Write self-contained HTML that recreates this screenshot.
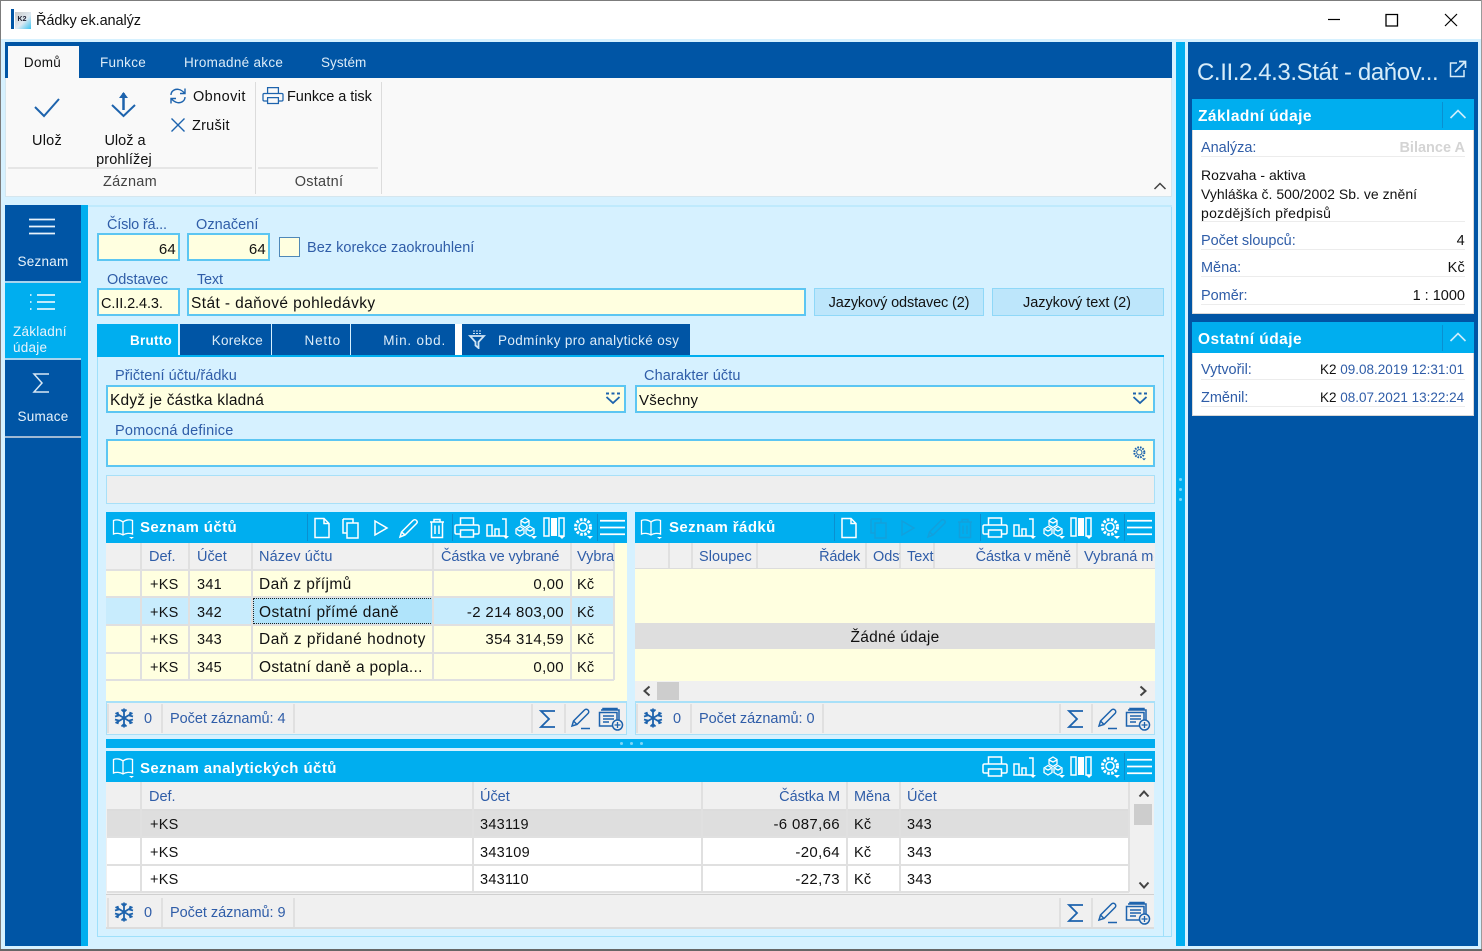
<!DOCTYPE html>
<html lang="cs"><head><meta charset="utf-8"><title>Řádky ek.analýz</title>
<style>
html,body{margin:0;padding:0;width:1482px;height:951px;overflow:hidden;background:#fff}
body{position:relative;font-family:"Liberation Sans",sans-serif;font-size:14.5px;color:#111}
div,svg{position:absolute}
.b{box-sizing:border-box}
.t{white-space:nowrap;line-height:18px;height:18px;letter-spacing:.25px;margin-top:1px}
.n{margin-top:0}
.l{color:#2f5da8;letter-spacing:-.03px}
.d{font-size:15.5px;letter-spacing:.4px}
.m{font-size:15px;letter-spacing:.35px}
.w{color:#fff}
.h{color:#fff;font-weight:bold;font-size:15px;letter-spacing:.42px}
.r{text-align:right}
.c{text-align:center}
.f{box-sizing:border-box;background:#ffffe0;border:2px solid #5cc6f2}
.tab{background:#0055a5;height:31px;top:324px}
.sep{background:#e0e0e0;width:2px}
svg{fill:none;stroke:currentColor;stroke-width:1.3}
.ic{color:#fff}
.blu{color:#1d63ad}
</style></head><body>
<svg width="0" height="0" style="left:0;top:0">
<symbol id="book" viewBox="0 0 22 22"><path d="M11 5C8 2.500 4 2.500 1.500 3.500V17C4 16 8 16 11 18C14 16 18 16 20.500 17V3.500C18 2.500 14 2.500 11 5ZM11 5V18"/><path d="M17 20h5l-2.500 2z" fill="currentColor" stroke="none"/></symbol>
<symbol id="doc" viewBox="0 0 22 22"><path d="M4 1.500H13L18 6.500V20.500H4ZM13 1.500V6.500H18" stroke-width="1.500"/></symbol>
<symbol id="copy" viewBox="0 0 22 22"><path d="M3 2H13V6M3 2V16H7M7 6H18V21H7Z" stroke-width="1.500"/></symbol>
<symbol id="play" viewBox="0 0 22 22"><path d="M6 4L18 11L6 18Z" stroke-width="1.500"/></symbol>
<symbol id="pen" viewBox="0 0 22 22"><path d="M3 20L4.500 15L16 3.500C17 2.500 18.500 2.500 19.500 3.500C20.500 4.500 20.500 5.500 19.500 6.500L8 18ZM4.500 15L8 18" stroke-width="1.500"/></symbol>
<symbol id="trash" viewBox="0 0 22 22"><path d="M4 5H18M8 5V2.500H14V5M5.500 5V20.500H16.500V5M9 8.500V17M13 8.500V17" stroke-width="1.500"/></symbol>
<symbol id="print" viewBox="0 0 26 24"><path d="M6.500 9V2H19.500V9M6.500 18H2.500C1.500 18 1 17.500 1 16.500V10.500C1 9.500 1.500 9 2.500 9H23.500C24.500 9 25 9.500 25 10.500V16.500C25 17.500 24.500 18 23.500 18H19.500M6.500 14H19.500V21H6.500Z" stroke-width="1.500"/></symbol>
<symbol id="bars" viewBox="0 0 24 24"><path d="M2 9H7V20H2ZM10 13H14V20H10ZM17 3H21V20H2" stroke-width="1.500"/><path d="M18 20h6l-3 3z" fill="currentColor" stroke="none"/></symbol>
<symbol id="cubes" viewBox="0 0 24 24"><path d="M12 2L16 4.500V9L12 11.500L8 9V4.500ZM7 10.500L11 13V17.500L7 20L3 17.500V13ZM17 10.500L21 13V17.500L17 20L13 17.500V13ZM8 5L12 7L16 5M4 13.500L7 15L10 13.500M14 13.500L17 15L20 13.500" stroke-width="1.300"/><path d="M18 20h6l-3 3z" fill="currentColor" stroke="none"/></symbol>
<symbol id="cols" viewBox="0 0 24 24"><path d="M2 2H7V20H2ZM17 2H22V20H17Z" stroke-width="1.500"/><path d="M9 2H15V20H9Z" fill="currentColor" stroke="none"/><path d="M17 20h6l-3 3z" fill="currentColor" stroke="none"/></symbol>
<symbol id="gear" viewBox="0 0 24 24"><circle cx="11" cy="11" r="4" stroke-width="1.500"/><circle cx="11" cy="11" r="7.500" stroke-width="3" stroke-dasharray="2.500 1.500"/><path d="M15 20h6l-3 3z" fill="currentColor" stroke="none"/></symbol>
<symbol id="menu" viewBox="0 0 26 22"><path d="M0 3.500H26M0 10.500H26M0 17.500H26" stroke-width="1.800"/></symbol>
<symbol id="snow" viewBox="0 0 22 22"><path d="M11 1.500V20.500M2.500 6L19.500 16M19.500 6L2.500 16M8.500 2.500L11 5L13.500 2.500M8.500 19.500L11 17L13.500 19.500M2 9.500L5.500 8.500L4.500 5M20 9.500L16.500 8.500L17.500 5M2 12.500L5.500 13.500L4.500 17M20 12.500L16.500 13.500L17.500 17" stroke-width="1.800"/></symbol>
<symbol id="sig" viewBox="0 0 22 22"><path d="M18 3H4L12 11L4 19H18" stroke-width="1.800"/></symbol>
<symbol id="pen2" viewBox="0 0 22 22"><path d="M2 18L3.500 13L14.500 2C15.500 1 17 1 18 2C19 3 19 4.500 18 5.500L7 16.500ZM3.500 13L7 16.500M11 20.500H20" stroke-width="1.500"/></symbol>
<symbol id="add" viewBox="0 0 26 24"><path d="M5 3V1.500H19V3M3 3H21V16M1.500 5.500H19V19H1.500ZM5 9H16M5 12H16M5 15H11" stroke-width="1.500"/><circle cx="19.500" cy="18" r="5" fill="#f0f0f0" stroke-width="1.500"/><path d="M16.500 18H22.500M19.500 15V21" stroke-width="1.300"/></symbol>
</svg>

<!-- window frame -->
<div style="left:0;top:0;width:1482px;height:1px;background:#7c7c7c"></div>
<div style="left:0;top:0;width:1px;height:951px;background:#7c7c7c"></div>
<div style="left:1481px;top:0;width:1px;height:951px;background:#9a9a9a"></div>
<div style="left:1px;top:39px;width:1480px;height:911px;background:#d6f1ff"></div>
<div style="left:0;top:949px;width:1482px;height:2px;background:#666"></div>
<div style="left:11px;top:9px;width:3px;height:20px;background:#0055a5"></div>
<div style="left:15px;top:12px;width:16px;height:17px;background:linear-gradient(135deg,#c9c9c9 0,#dfeaf2 55%,#3cc3f0 100%)"></div>
<div style="left:15px;top:15px;width:14px;height:9px;font-size:7px;font-weight:bold;line-height:9px;text-align:center;color:#223">K2</div>
<div class="t" style="left:36px;top:11px;font-size:14.500px;letter-spacing:-.1px">Řádky ek.analýz</div>
<svg style="left:1328px;top:14px;color:#000" width="14" height="12"><path d="M0 5.500H12" stroke-width="1.200"/></svg>
<svg style="left:1385px;top:13px;color:#000" width="14" height="14"><path d="M1 1.500H12.500V13H1Z" stroke-width="1.300"/></svg>
<svg style="left:1444px;top:13px;color:#000" width="14" height="14"><path d="M1 1L13 13M13 1L1 13" stroke-width="1.200"/></svg>

<!-- ribbon -->
<div style="left:5px;top:42px;width:1167px;height:36px;background:#0055a5"></div>
<div class="b" style="left:5px;top:78px;width:1167px;height:119px;background:#f9f9f9;border:1px solid #d5e6ee;border-top:0"></div>
<div style="left:8px;top:46px;width:71px;height:32px;background:#f9f9f9"></div>
<div class="t c" style="left:7px;top:53px;width:71px;font-size:13.500px;letter-spacing:.3px">Domů</div>
<div class="t w" style="left:100px;top:53px;font-size:13.500px;letter-spacing:.3px;color:#dcecf8">Funkce</div>
<div class="t w" style="left:184px;top:53px;font-size:13.500px;letter-spacing:.3px;color:#dcecf8">Hromadné akce</div>
<div class="t w" style="left:321px;top:53px;font-size:13.500px;letter-spacing:.05px;color:#dcecf8">Systém</div>
<svg class="blu" style="left:33px;top:96px" width="28" height="24"><path d="M2 11L11 20L26 3" stroke-width="2"/></svg>
<svg class="blu" style="left:110px;top:90px" width="28" height="30"><path d="M2 15L13.500 26L25 15" stroke-width="2"/><path d="M13.500 3V20" stroke-width="2.500"/><path d="M9 8L13.500 2L18 8Z" fill="currentColor" stroke="none"/></svg>
<div class="t c" style="left:17px;top:131px;width:60px">Ulož</div>
<div class="t c" style="left:90px;top:131px;width:70px;letter-spacing:0">Ulož a</div>
<div class="t c" style="left:84px;top:150px;width:80px;letter-spacing:.1px">prohlížej</div>
<svg class="blu" style="left:169px;top:87px" width="18" height="18" viewBox="0 0 18 18"><path d="M2 8C2 4 6 1.500 10 2.500C12.500 3 14 4.500 15.500 6M16 10C16 14 12 16.500 8 15.500C5.500 15 4 13.500 2.500 12M16 1.500V6.500H11M2 16.500V11.500H7" stroke-width="1.400"/></svg>
<svg class="blu" style="left:170px;top:117px" width="16" height="16"><path d="M1.500 1.500L14.500 14.500M14.500 1.500L1.500 14.500" stroke-width="1.400"/></svg>
<div class="t" style="left:193px;top:87px;letter-spacing:.4px">Obnovit</div>
<div class="t" style="left:192px;top:116px">Zrušit</div>
<svg class="blu" style="left:262px;top:86px" width="22" height="20"><use href="#print"/></svg>
<div class="t" style="left:287px;top:87px;letter-spacing:-.05px">Funkce a tisk</div>
<div style="left:8px;top:167px;width:244px;height:2px;background:#e6e6e6"></div>
<div style="left:258px;top:167px;width:120px;height:2px;background:#e6e6e6"></div>
<div style="left:255px;top:82px;width:1px;height:112px;background:#dcdcdc"></div>
<div style="left:381px;top:82px;width:1px;height:112px;background:#dcdcdc"></div>
<div class="t c" style="left:8px;top:172px;width:244px;color:#444">Záznam</div>
<div class="t c" style="left:259px;top:172px;width:120px;color:#444">Ostatní</div>
<svg style="left:1153px;top:181px;color:#444" width="14" height="10"><path d="M1.500 8L7 2.500L12.500 8" stroke-width="1.500"/></svg>

<!-- left rail -->
<div style="left:5px;top:205px;width:76px;height:741px;background:#0055a5"></div>
<div style="left:81px;top:205px;width:7px;height:741px;background:#00aeef"></div>
<div style="left:5px;top:281px;width:76px;height:2px;background:#a8d4ee"></div>
<div style="left:5px;top:283px;width:76px;height:75px;background:#00aeef"></div>
<div style="left:5px;top:358px;width:76px;height:2px;background:#a8d4ee"></div>
<div style="left:5px;top:436px;width:76px;height:2px;background:#9fb9d4"></div>
<svg class="ic" style="left:29px;top:216px;color:#e8f3fb" width="26" height="22"><use href="#menu"/></svg>
<div class="t c n" style="left:5px;top:253px;width:76px;color:#e8f3fb;font-size:13.500px">Seznam</div>
<svg style="left:29px;top:292px;color:#fff" width="26" height="20"><path d="M8 3H26M8 10H26M8 17H26" stroke-width="1.400"/><path d="M1 3H4M1 10H4M1 17H4" stroke-width="1.400" stroke-dasharray="1.500 1.500"/></svg>
<div class="t n" style="left:13px;top:323px;color:#e8f3fb;font-size:13.500px">Základní</div>
<div class="t n" style="left:13px;top:339px;color:#e8f3fb;font-size:13.500px">údaje</div>
<svg style="left:32px;top:372px;color:#d8e8f5" width="20" height="22"><path d="M17 2H2L10 11L2 20H17" stroke-width="1.500"/></svg>
<div class="t c n" style="left:5px;top:408px;width:76px;color:#e8f3fb;font-size:13.500px">Sumace</div>

<!-- content -->
<div class="b" style="left:97px;top:205px;width:1075px;height:732px;border:1px solid #9fe0fb;border-left:0;border-top:0"></div>
<div style="left:88px;top:205px;width:1084px;height:2px;background:#bfeafd"></div>
<div style="left:97px;top:936px;width:1067px;height:1px;background:#9fe0fb"></div>
<div style="left:1163px;top:357px;width:1px;height:580px;background:#9fe0fb"></div>
<div style="left:97px;top:357px;width:1px;height:580px;background:#9fe0fb"></div>

<div class="t l" style="left:107px;top:215px;letter-spacing:-.2px">Číslo řá...</div>
<div class="t l" style="left:196px;top:215px;letter-spacing:.05px">Označení</div>
<div class="f" style="left:97px;top:233px;width:83px;height:28px"></div>
<div class="f" style="left:187px;top:233px;width:83px;height:28px"></div>
<div class="t r" style="left:97px;top:240px;width:79px;font-size:15px">64</div>
<div class="t r" style="left:187px;top:240px;width:79px;font-size:15px">64</div>
<div class="b" style="left:279px;top:237px;width:21px;height:20px;background:#ffffe0;border:1px solid #4f88b8"></div>
<div class="t l n" style="left:307px;top:239px;letter-spacing:.02px">Bez korekce zaokrouhlení</div>
<div class="t l" style="left:107px;top:270px">Odstavec</div>
<div class="t l" style="left:197px;top:270px;letter-spacing:-.2px">Text</div>
<div class="f" style="left:97px;top:288px;width:83px;height:28px"></div>
<div class="f" style="left:187px;top:288px;width:619px;height:28px"></div>
<div class="t" style="left:101px;top:294px;letter-spacing:-.1px">C.II.2.4.3.</div>
<div class="t d" style="left:191px;top:294px">Stát - daňové pohledávky</div>
<div class="b" style="left:814px;top:288px;width:170px;height:28px;background:#bde6fb;border:1px solid #8fd8f8"></div>
<div class="b" style="left:992px;top:288px;width:172px;height:28px;background:#bde6fb;border:1px solid #8fd8f8"></div>
<div class="t c n" style="left:814px;top:294px;width:170px;letter-spacing:-.13px">Jazykový odstavec (2)</div>
<div class="t c n" style="left:992px;top:294px;width:170px;letter-spacing:-.05px">Jazykový text (2)</div>

<!-- tabs -->
<div class="tab" style="left:97px;width:81px;background:#00aeef"></div>
<div class="tab" style="left:180px;width:91px"></div>
<div class="tab" style="left:272px;width:78px"></div>
<div class="tab" style="left:351px;width:104px"></div>
<div class="tab" style="left:462px;width:228px"></div>
<div style="left:455px;top:324px;width:7px;height:31px;background:#fff"></div>
<div style="left:97px;top:355px;width:1067px;height:2px;background:#00aeef"></div>
<div class="t r w n" style="left:97px;top:332px;width:75px;font-size:13.500px;font-weight:bold;color:#fff">Brutto</div>
<div class="t r n" style="left:180px;top:332px;width:83px;font-size:13.500px;color:#dcecf8">Korekce</div>
<div class="t r n" style="left:272px;top:332px;width:69px;font-size:13.500px;letter-spacing:.85px;color:#dcecf8">Netto</div>
<div class="t r n" style="left:351px;top:332px;width:95px;font-size:13.500px;letter-spacing:.8px;color:#dcecf8">Min. obd.</div>
<div class="t n" style="left:498px;top:332px;font-size:13.500px;letter-spacing:.35px;color:#dcecf8">Podmínky pro analytické osy</div>
<svg style="left:468px;top:329px;color:#cfe4f4" width="18" height="20"><path d="M2 7H16L10.500 13V19L7.500 16.500V13Z" stroke-width="1.800"/><path d="M5 2H13M5 4.500H13" stroke-width="1" stroke-dasharray="2 1"/></svg>

<div class="t l" style="left:115px;top:366px;letter-spacing:.05px">Přičtení účtu/řádku</div>
<div class="t l" style="left:644px;top:366px;letter-spacing:.1px">Charakter účtu</div>
<div class="f" style="left:106px;top:385px;width:520px;height:28px"></div>
<div class="f" style="left:635px;top:385px;width:520px;height:28px"></div>
<div class="t" style="left:110px;top:391px;font-size:15.500px;letter-spacing:.2px">Když je částka kladná</div>
<div class="t" style="left:639px;top:391px;font-size:15px">Všechny</div>
<svg class="blu" style="left:605px;top:392px" width="16" height="13"><path d="M1 1.500H4M6.500 1.500H9.500M12 1.500H15" stroke-width="2"/><path d="M1.500 5L8 11L14.500 5" stroke-width="1.800"/></svg>
<svg class="blu" style="left:1132px;top:392px" width="16" height="13"><path d="M1 1.500H4M6.500 1.500H9.500M12 1.500H15" stroke-width="2"/><path d="M1.500 5L8 11L14.500 5" stroke-width="1.800"/></svg>
<div class="t l" style="left:115px;top:421px;letter-spacing:.2px">Pomocná definice</div>
<div class="f" style="left:106px;top:439px;width:1049px;height:28px"></div>
<svg class="blu" style="left:1132px;top:445px" width="16" height="16" viewBox="0 0 22 22"><use href="#gear"/></svg>
<div class="b" style="left:106px;top:475px;width:1049px;height:29px;background:#eeeeee;border:1px solid #a8e0f8"></div>

<!-- TABLE 1 -->
<div style="left:106px;top:512px;width:521px;height:223px;background:#ffffe0"></div>
<div style="left:106px;top:512px;width:521px;height:31px;background:#00aeef"></div>
<svg class="ic" style="left:112px;top:517px" width="22" height="22"><use href="#book"/></svg>
<div class="t h" style="left:140px;top:518px">Seznam účtů</div>
<div style="left:307px;top:514px;width:1px;height:27px;background:#0a8fd0"></div>
<div style="left:452px;top:514px;width:1px;height:27px;background:#0a8fd0"></div>
<div style="left:597px;top:514px;width:1px;height:27px;background:#0a8fd0"></div>
<svg class="ic" style="left:311px;top:517px" width="22" height="22"><use href="#doc"/></svg>
<svg class="ic" style="left:340px;top:517px" width="22" height="22"><use href="#copy"/></svg>
<svg class="ic" style="left:369px;top:517px" width="22" height="22"><use href="#play"/></svg>
<svg class="ic" style="left:397px;top:517px" width="22" height="22"><use href="#pen"/></svg>
<svg class="ic" style="left:426px;top:517px" width="22" height="22"><use href="#trash"/></svg>
<svg class="ic" style="left:454px;top:516px" width="26" height="24"><use href="#print"/></svg>
<svg class="ic" style="left:485px;top:516px" width="24" height="24"><use href="#bars"/></svg>
<svg class="ic" style="left:513px;top:516px" width="24" height="24"><use href="#cubes"/></svg>
<svg class="ic" style="left:542px;top:516px" width="24" height="24"><use href="#cols"/></svg>
<svg class="ic" style="left:572px;top:516px" width="24" height="24"><use href="#gear"/></svg>
<svg class="ic" style="left:600px;top:517px" width="25" height="22"><use href="#menu"/></svg>

<div style="left:106px;top:543px;width:508px;height:27px;background:#f0f0f0"></div>
<div style="left:106px;top:597px;width:508px;height:28px;background:#c8ecfd"></div>
<div class="b" style="left:253px;top:598px;width:180px;height:26px;background:#b0e4fb;border:1px dotted #222"></div>
<div style="left:106px;top:569px;width:508px;height:2px;background:#e0e0e0"></div>
<div style="left:106px;top:596px;width:508px;height:2px;background:#e0e0e0"></div>
<div style="left:106px;top:624px;width:508px;height:2px;background:#e0e0e0"></div>
<div style="left:106px;top:652px;width:508px;height:2px;background:#e0e0e0"></div>
<div style="left:106px;top:679px;width:508px;height:2px;background:#e0e0e0"></div>
<div class="sep" style="left:140px;top:543px;height:137px"></div>
<div class="sep" style="left:188px;top:543px;height:137px"></div>
<div class="sep" style="left:251px;top:543px;height:137px"></div>
<div class="sep" style="left:432px;top:543px;height:137px"></div>
<div class="sep" style="left:570px;top:543px;height:137px"></div>
<div class="sep" style="left:613px;top:543px;height:137px"></div>
<div class="t l" style="left:149px;top:547px">Def.</div>
<div class="t l" style="left:197px;top:547px">Účet</div>
<div class="t l" style="left:259px;top:547px;letter-spacing:.1px">Název účtu</div>
<div class="t l" style="left:441px;top:547px;letter-spacing:-.1px">Částka ve vybrané</div>
<div class="t l" style="left:577px;top:547px;width:37px;overflow:hidden">Vybrané</div>

<div class="t" style="left:150px;top:575px">+KS</div><div class="t" style="left:197px;top:575px">341</div><div class="t d" style="left:259px;top:575px">Daň z příjmů</div><div class="t r m" style="left:440px;top:575px;width:124px">0,00</div><div class="t" style="left:577px;top:575px">Kč</div>
<div class="t" style="left:150px;top:603px">+KS</div><div class="t" style="left:197px;top:603px">342</div><div class="t d" style="left:259px;top:603px">Ostatní přímé daně</div><div class="t r m" style="left:440px;top:603px;width:124px">-2 214 803,00</div><div class="t" style="left:577px;top:603px">Kč</div>
<div class="t" style="left:150px;top:630px">+KS</div><div class="t" style="left:197px;top:630px">343</div><div class="t d" style="left:259px;top:630px;letter-spacing:.52px">Daň z přidané hodnoty</div><div class="t r m" style="left:440px;top:630px;width:124px">354 314,59</div><div class="t" style="left:577px;top:630px">Kč</div>
<div class="t" style="left:150px;top:658px">+KS</div><div class="t" style="left:197px;top:658px">345</div><div class="t d" style="left:259px;top:658px;letter-spacing:.3px">Ostatní daně a popla...</div><div class="t r m" style="left:440px;top:658px;width:124px">0,00</div><div class="t" style="left:577px;top:658px">Kč</div>

<div class="b" style="left:106px;top:701px;width:521px;height:34px;background:#f0f0f0;border:1px solid #a8e0f8;border-top:2px solid #a8e0f8"></div>
<div class="sep" style="left:107px;top:704px;height:29px"></div>
<div class="sep" style="left:161px;top:704px;height:29px"></div>
<div class="sep" style="left:293px;top:704px;height:29px"></div>
<div class="sep" style="left:531px;top:704px;height:29px"></div>
<div class="sep" style="left:564px;top:704px;height:29px"></div>
<svg class="blu" style="left:113px;top:707px" width="22" height="22"><use href="#snow"/></svg>
<div class="t l n" style="left:144px;top:710px">0</div>
<div class="t l n" style="left:170px;top:710px">Počet záznamů: 4</div>
<svg class="blu" style="left:537px;top:708px" width="22" height="22"><use href="#sig"/></svg>
<svg class="blu" style="left:570px;top:708px" width="22" height="22"><use href="#pen2"/></svg>
<svg class="blu" style="left:598px;top:707px" width="26" height="24"><use href="#add"/></svg>

<!-- TABLE 2 -->
<div style="left:635px;top:512px;width:520px;height:223px;background:#ffffe0"></div>
<div style="left:635px;top:512px;width:520px;height:31px;background:#00aeef"></div>
<svg class="ic" style="left:640px;top:517px" width="22" height="22"><use href="#book"/></svg>
<div class="t h" style="left:669px;top:518px">Seznam řádků</div>
<div style="left:834px;top:514px;width:1px;height:27px;background:#0a8fd0"></div>
<div style="left:980px;top:514px;width:1px;height:27px;background:#0a8fd0"></div>
<div style="left:1124px;top:514px;width:1px;height:27px;background:#0a8fd0"></div>
<svg class="ic" style="left:838px;top:517px" width="22" height="22"><use href="#doc"/></svg>
<svg style="left:868px;top:517px;color:#12a0dc" width="22" height="22"><use href="#copy"/></svg>
<svg style="left:896px;top:517px;color:#12a0dc" width="22" height="22"><use href="#play"/></svg>
<svg style="left:925px;top:517px;color:#12a0dc" width="22" height="22"><use href="#pen"/></svg>
<svg style="left:954px;top:517px;color:#12a0dc" width="22" height="22"><use href="#trash"/></svg>
<svg class="ic" style="left:982px;top:516px" width="26" height="24"><use href="#print"/></svg>
<svg class="ic" style="left:1012px;top:516px" width="24" height="24"><use href="#bars"/></svg>
<svg class="ic" style="left:1041px;top:516px" width="24" height="24"><use href="#cubes"/></svg>
<svg class="ic" style="left:1069px;top:516px" width="24" height="24"><use href="#cols"/></svg>
<svg class="ic" style="left:1099px;top:516px" width="24" height="24"><use href="#gear"/></svg>
<svg class="ic" style="left:1127px;top:517px" width="25" height="22"><use href="#menu"/></svg>
<div style="left:635px;top:543px;width:520px;height:25px;background:#f0f0f0"></div>
<div style="left:635px;top:568px;width:520px;height:1px;background:#dcdcdc"></div>
<div class="sep" style="left:668px;top:543px;height:25px"></div>
<div class="sep" style="left:691px;top:543px;height:25px"></div>
<div class="sep" style="left:756px;top:543px;height:25px"></div>
<div class="sep" style="left:865px;top:543px;height:25px"></div>
<div class="sep" style="left:899px;top:543px;height:25px"></div>
<div class="sep" style="left:933px;top:543px;height:25px"></div>
<div class="sep" style="left:1076px;top:543px;height:25px"></div>
<div class="t l" style="left:699px;top:547px;letter-spacing:.05px">Sloupec</div>
<div class="t l r" style="left:800px;top:547px;width:60px;letter-spacing:-.2px">Řádek</div>
<div class="t l" style="left:873px;top:547px;width:27px;overflow:hidden">Odstavec</div>
<div class="t l" style="left:907px;top:547px">Text</div>
<div class="t l r" style="left:940px;top:547px;width:131px;letter-spacing:-.1px">Částka v měně</div>
<div class="t l" style="left:1084px;top:547px;width:70px;overflow:hidden">Vybraná měna</div>
<div style="left:635px;top:623px;width:520px;height:26px;background:#dedede"></div>
<div class="t c" style="left:635px;top:628px;width:520px;font-size:15.500px">Žádné údaje</div>
<div style="left:635px;top:681px;width:520px;height:20px;background:#f0f0f0"></div>
<div style="left:657px;top:682px;width:22px;height:18px;background:#cdcdcd"></div>
<svg style="left:642px;top:685px;color:#444" width="10" height="12"><path d="M7.500 1.500L2.500 6L7.500 10.500" stroke-width="2"/></svg>
<svg style="left:1138px;top:685px;color:#444" width="10" height="12"><path d="M2.500 1.500L7.500 6L2.500 10.500" stroke-width="2"/></svg>
<div class="b" style="left:635px;top:701px;width:520px;height:34px;background:#f0f0f0;border:1px solid #a8e0f8;border-top:2px solid #a8e0f8"></div>
<div class="sep" style="left:636px;top:704px;height:29px"></div>
<div class="sep" style="left:690px;top:704px;height:29px"></div>
<div class="sep" style="left:822px;top:704px;height:29px"></div>
<div class="sep" style="left:1059px;top:704px;height:29px"></div>
<div class="sep" style="left:1091px;top:704px;height:29px"></div>
<svg class="blu" style="left:642px;top:707px" width="22" height="22"><use href="#snow"/></svg>
<div class="t l n" style="left:673px;top:710px">0</div>
<div class="t l n" style="left:699px;top:710px">Počet záznamů: 0</div>
<svg class="blu" style="left:1065px;top:708px" width="22" height="22"><use href="#sig"/></svg>
<svg class="blu" style="left:1097px;top:708px" width="22" height="22"><use href="#pen2"/></svg>
<svg class="blu" style="left:1125px;top:707px" width="26" height="24"><use href="#add"/></svg>

<!-- splitter -->
<div style="left:106px;top:739px;width:1049px;height:9px;background:#00aeef"></div>
<div style="left:620px;top:742px;width:3px;height:3px;border-radius:2px;background:#7fd6f7"></div>
<div style="left:630px;top:742px;width:3px;height:3px;border-radius:2px;background:#7fd6f7"></div>
<div style="left:640px;top:742px;width:3px;height:3px;border-radius:2px;background:#7fd6f7"></div>

<!-- TABLE 3 -->
<div style="left:106px;top:751px;width:1048px;height:178px;background:#f0f0f0"></div>
<div style="left:106px;top:751px;width:1049px;height:31px;background:#00aeef"></div>
<svg class="ic" style="left:112px;top:756px" width="22" height="22"><use href="#book"/></svg>
<div class="t h" style="left:140px;top:759px">Seznam analytických účtů</div>
<div style="left:1124px;top:753px;width:1px;height:27px;background:#0a8fd0"></div>
<svg class="ic" style="left:982px;top:755px" width="26" height="24"><use href="#print"/></svg>
<svg class="ic" style="left:1012px;top:755px" width="24" height="24"><use href="#bars"/></svg>
<svg class="ic" style="left:1041px;top:755px" width="24" height="24"><use href="#cubes"/></svg>
<svg class="ic" style="left:1069px;top:755px" width="24" height="24"><use href="#cols"/></svg>
<svg class="ic" style="left:1099px;top:755px" width="24" height="24"><use href="#gear"/></svg>
<svg class="ic" style="left:1127px;top:756px" width="25" height="22"><use href="#menu"/></svg>
<div style="left:107px;top:809px;width:1022px;height:28px;background:#dedede"></div>
<div style="left:107px;top:838px;width:1022px;height:54px;background:#fff"></div>
<div style="left:107px;top:809px;width:1022px;height:2px;background:#dcdcdc"></div>
<div style="left:107px;top:836px;width:1022px;height:2px;background:#e0e0e0"></div>
<div style="left:107px;top:864px;width:1022px;height:2px;background:#e0e0e0"></div>
<div style="left:107px;top:891px;width:1022px;height:2px;background:#e0e0e0"></div>
<div style="left:106px;top:894px;width:1048px;height:1px;background:#d0d0d0"></div>
<div class="sep" style="left:140px;top:782px;height:110px"></div>
<div class="sep" style="left:472px;top:782px;height:110px"></div>
<div class="sep" style="left:701px;top:782px;height:110px"></div>
<div class="sep" style="left:846px;top:782px;height:110px"></div>
<div class="sep" style="left:899px;top:782px;height:110px"></div>
<div class="sep" style="left:1128px;top:782px;height:110px"></div>
<div class="t l" style="left:149px;top:787px">Def.</div>
<div class="t l" style="left:480px;top:787px">Účet</div>
<div class="t l r" style="left:700px;top:787px;width:140px;letter-spacing:-.05px">Částka M</div>
<div class="t l" style="left:854px;top:787px">Měna</div>
<div class="t l" style="left:907px;top:787px">Účet</div>
<div class="t" style="left:150px;top:815px">+KS</div><div class="t" style="left:480px;top:815px">343119</div><div class="t r m" style="left:700px;top:815px;width:140px">-6 087,66</div><div class="t" style="left:854px;top:815px">Kč</div><div class="t" style="left:907px;top:815px">343</div>
<div class="t" style="left:150px;top:843px">+KS</div><div class="t" style="left:480px;top:843px">343109</div><div class="t r m" style="left:700px;top:843px;width:140px">-20,64</div><div class="t" style="left:854px;top:843px">Kč</div><div class="t" style="left:907px;top:843px">343</div>
<div class="t" style="left:150px;top:870px">+KS</div><div class="t" style="left:480px;top:870px">343110</div><div class="t r m" style="left:700px;top:870px;width:140px">-22,73</div><div class="t" style="left:854px;top:870px">Kč</div><div class="t" style="left:907px;top:870px">343</div>
<div style="left:1134px;top:804px;width:18px;height:21px;background:#cdcdcd"></div>
<svg style="left:1138px;top:789px;color:#444" width="12" height="10"><path d="M1.500 7.500L6 2.500L10.500 7.500" stroke-width="2"/></svg>
<svg style="left:1138px;top:880px;color:#444" width="12" height="10"><path d="M1.500 2.500L6 7.500L10.500 2.500" stroke-width="2"/></svg>
<div class="sep" style="left:107px;top:898px;height:29px"></div>
<div class="sep" style="left:161px;top:898px;height:29px"></div>
<div class="sep" style="left:293px;top:898px;height:29px"></div>
<div class="sep" style="left:1059px;top:898px;height:29px"></div>
<div class="sep" style="left:1091px;top:898px;height:29px"></div>
<div style="left:106px;top:927px;width:1048px;height:2px;background:#dcdcdc"></div>
<svg class="blu" style="left:113px;top:901px" width="22" height="22"><use href="#snow"/></svg>
<div class="t l n" style="left:144px;top:904px">0</div>
<div class="t l n" style="left:170px;top:904px">Počet záznamů: 9</div>
<svg class="blu" style="left:1065px;top:902px" width="22" height="22"><use href="#sig"/></svg>
<svg class="blu" style="left:1097px;top:902px" width="22" height="22"><use href="#pen2"/></svg>
<svg class="blu" style="left:1125px;top:901px" width="26" height="24"><use href="#add"/></svg>

<!-- right panel -->
<div style="left:1176px;top:42px;width:9px;height:904px;background:#00aeef"></div>
<div style="left:1179px;top:478px;width:3px;height:3px;background:#7fd6f7;border-radius:2px"></div>
<div style="left:1179px;top:488px;width:3px;height:3px;background:#7fd6f7;border-radius:2px"></div>
<div style="left:1179px;top:498px;width:3px;height:3px;background:#7fd6f7;border-radius:2px"></div>
<div style="left:1188px;top:42px;width:290px;height:904px;background:#0055a5"></div>
<div class="t" style="left:1197px;top:57px;height:30px;line-height:30px;font-size:24px;color:#d6ecf9;letter-spacing:-.4px">C.II.2.4.3.Stát - daňov...</div>
<svg style="left:1449px;top:60px;color:#d6ecf9" width="18" height="18"><path d="M8 3H1.500V16.500H15V10" stroke-width="1.500"/><path d="M6 12L16 2M10 1.500H16.500V8" stroke-width="1.700"/></svg>
<div style="left:1192px;top:99px;width:282px;height:31px;background:#00aeef"></div>
<div class="t h" style="left:1198px;top:107px;font-size:15.500px;letter-spacing:.45px">Základní údaje</div>
<div style="left:1442px;top:102px;width:1px;height:26px;background:#0a8fd0"></div>
<svg style="left:1449px;top:108px;color:#cdeefc" width="18" height="12"><path d="M1.500 10L9 2.500L16.500 10" stroke-width="1.600"/></svg>
<div class="b" style="left:1192px;top:130px;width:282px;height:184px;background:#fff;border:1px solid #d8d8d8;border-top:0"></div>
<div class="t l n" style="left:1201px;top:139px">Analýza:</div>
<div class="t r n" style="left:1330px;top:139px;width:135px;color:#d4d4d4;font-weight:bold;letter-spacing:0">Bilance A</div>
<div style="left:1201px;top:156px;width:264px;height:1px;background:#ececec"></div>
<div class="t n" style="left:1201px;top:166px;font-size:14px;letter-spacing:.03px">Rozvaha - aktiva</div>
<div class="t n" style="left:1201px;top:185px;font-size:14px;letter-spacing:.03px">Vyhláška č. 500/2002 Sb. ve znění</div>
<div class="t n" style="left:1201px;top:204px;font-size:14px;letter-spacing:.3px">pozdějších předpisů</div>
<div style="left:1201px;top:221px;width:264px;height:1px;background:#ececec"></div>
<div class="t l" style="left:1201px;top:231px">Počet sloupců:</div><div class="t r" style="left:1400px;top:231px;width:65px">4</div>
<div style="left:1201px;top:249px;width:264px;height:1px;background:#ececec"></div>
<div class="t l n" style="left:1201px;top:259px">Měna:</div><div class="t r n" style="left:1400px;top:259px;width:65px">Kč</div>
<div style="left:1201px;top:276px;width:264px;height:1px;background:#ececec"></div>
<div class="t l" style="left:1201px;top:286px">Poměr:</div><div class="t r" style="left:1400px;top:286px;width:65px;letter-spacing:0">1 : 1000</div>
<div style="left:1201px;top:304px;width:264px;height:1px;background:#ececec"></div>
<div style="left:1192px;top:322px;width:282px;height:31px;background:#00aeef"></div>
<div class="t h" style="left:1198px;top:330px;font-size:15.500px;letter-spacing:.45px">Ostatní údaje</div>
<div style="left:1442px;top:325px;width:1px;height:26px;background:#0a8fd0"></div>
<svg style="left:1449px;top:331px;color:#cdeefc" width="18" height="12"><path d="M1.500 10L9 2.500L16.500 10" stroke-width="1.600"/></svg>
<div class="b" style="left:1192px;top:353px;width:282px;height:63px;background:#fff;border:1px solid #d8d8d8;border-top:0"></div>
<div class="t l n" style="left:1201px;top:361px">Vytvořil:</div>
<div class="t l n" style="left:1320px;top:361px;font-size:13.500px;letter-spacing:0"><span style="color:#111">K2</span> 09.08.2019 12:31:01</div>
<div style="left:1201px;top:379px;width:264px;height:1px;background:#ececec"></div>
<div class="t l n" style="left:1201px;top:389px">Změnil:</div>
<div class="t l n" style="left:1320px;top:389px;font-size:13.500px;letter-spacing:0"><span style="color:#111">K2</span> 08.07.2021 13:22:24</div>
<div style="left:1201px;top:406px;width:264px;height:1px;background:#ececec"></div>
</body></html>
